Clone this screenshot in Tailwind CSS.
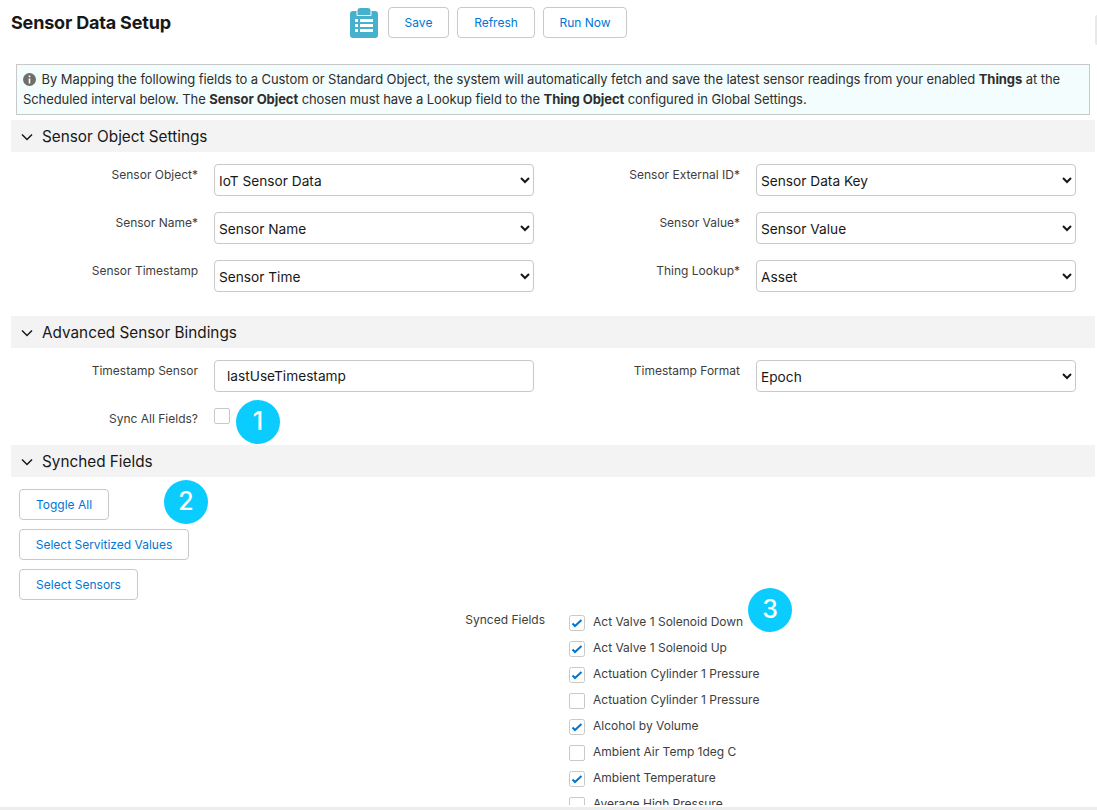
<!DOCTYPE html>
<html lang="en">
<head>
<meta charset="utf-8">
<title>Sensor Data Setup</title>
<script src="https://cdn.jsdelivr.net/npm/@tailwindcss/browser@4"></script>
</head>
<body class="bg-white font-['Inter',sans-serif] text-[#3e3e3c]">
<div class="relative h-[810px] w-[1097px] overflow-hidden">
 <div class="h-[805px] overflow-hidden">
  <header class="flex h-[64px] items-start pl-[11px] pt-[7px]">
    <h1 class="w-[339px] pt-[5px] text-[18px] leading-[22px] font-bold tracking-[-0.18px] text-[#181818]">Sensor Data Setup</h1>
    <svg class="h-[31px] w-[28px]" viewBox="0 0 28 31" aria-hidden="true">
      <path d="M3 4h22a3 3 0 0 1 3 3v21a3 3 0 0 1-3 3H3a3 3 0 0 1-3-3V7a3 3 0 0 1 3-3z" fill="#45b1cd"/>
      <path d="M7 8.500V3.500A3 3 0 0 1 10 .5h8a3 3 0 0 1 3 3v5z" fill="#45b1cd" stroke="#fff" stroke-width="1"/>
      <path d="M5 12h3v3H5zM10 12h13v3H10zM5 17h3v3H5zM10 17h13v3H10zM5 22h3v3H5zM10 22h13v3H10z" fill="#fff"/>
    </svg>
    <div class="ml-[10px] flex gap-2">
      <button class="h-[31px] w-[61px] rounded-[4px] border border-[#c9c9c9] bg-white text-[12px] text-[#0176d3]">Save</button>
      <button class="h-[31px] w-[78px] rounded-[4px] border border-[#c9c9c9] bg-white text-[12px] text-[#0176d3]">Refresh</button>
      <button class="h-[31px] w-[84px] rounded-[4px] border border-[#c9c9c9] bg-white text-[12px] text-[#0176d3]">Run Now</button>
    </div>
  </header>

  <div class="ml-[16px] h-[51px] w-[1074px] border border-[#c9c9c9] bg-[#f3fdfd] px-[6px] pt-[4px] text-[13px] leading-[20px] tracking-[-0.08px] text-[#2e2e2e]">
    <svg class="mr-[2px] inline-block h-[13px] w-[13px] align-[-2px]" viewBox="0 0 13 13" aria-hidden="true"><circle cx="6.500" cy="6.500" r="6.500" fill="#706e6b"/><path d="M5.700 2.600h1.600v1.600H5.700zM5.700 5.400h1.600v5H5.700z" fill="#fff"/></svg>
    By Mapping the following fields to a Custom or Standard Object, the system will automatically fetch and save the latest sensor readings from your enabled <b>Things</b> at the Scheduled interval below. The <b>Sensor Object</b> chosen must have a Lookup field to the <b>Thing Object</b> configured in Global Settings.
  </div>

  <section class="mt-[5px]">
    <h2 class="ml-[11px] flex h-[32px] w-[1084px] items-center gap-[9px] bg-[#f3f3f3] pl-[10px] pt-[2px] text-[15.3px] text-[#181818]">
      <svg class="h-[12px] w-[12px]" viewBox="0 0 12 12" fill="none" stroke="#181818" stroke-width="1.500" aria-hidden="true"><path d="M1 3.500l5 5 5-5"/></svg>Sensor Object Settings
    </h2>
    <div class="mt-[12px] ml-[11px] grid grid-cols-[187px_336px_206px_320px] gap-y-[16px] text-[12px]">
      <label class="pt-[3px] text-right leading-[15px]">Sensor Object*</label>
      <select class="ml-[16px] h-[32px] w-[320px] rounded-[4px] border border-[#c9c9c9] bg-white pt-[2px] text-[13.7px] text-[#181818]"><option>IoT Sensor Data</option></select>
      <label class="pt-[3px] text-right leading-[15px]">Sensor External ID*</label>
      <select class="ml-[16px] h-[32px] w-[320px] rounded-[4px] border border-[#c9c9c9] bg-white pt-[2px] text-[13.7px] text-[#181818]"><option>Sensor Data Key</option></select>

      <label class="pt-[3px] text-right leading-[15px]">Sensor Name*</label>
      <select class="ml-[16px] h-[32px] w-[320px] rounded-[4px] border border-[#c9c9c9] bg-white pt-[2px] text-[13.7px] text-[#181818]"><option>Sensor Name</option></select>
      <label class="pt-[3px] text-right leading-[15px]">Sensor Value*</label>
      <select class="ml-[16px] h-[32px] w-[320px] rounded-[4px] border border-[#c9c9c9] bg-white pt-[2px] text-[13.7px] text-[#181818]"><option>Sensor Value</option></select>

      <label class="pt-[3px] text-right leading-[15px]">Sensor Timestamp</label>
      <select class="ml-[16px] h-[32px] w-[320px] rounded-[4px] border border-[#c9c9c9] bg-white pt-[2px] text-[13.7px] text-[#181818]"><option>Sensor Time</option></select>
      <label class="pt-[3px] text-right leading-[15px]">Thing Lookup*</label>
      <select class="ml-[16px] h-[32px] w-[320px] rounded-[4px] border border-[#c9c9c9] bg-white pt-[2px] text-[13.7px] text-[#181818]"><option>Asset</option></select>
    </div>
  </section>

  <section class="mt-[24px]">
    <h2 class="ml-[11px] flex h-[32px] w-[1084px] items-center gap-[9px] bg-[#f3f3f3] pl-[10px] pt-[2px] text-[15.3px] text-[#181818]">
      <svg class="h-[12px] w-[12px]" viewBox="0 0 12 12" fill="none" stroke="#181818" stroke-width="1.500" aria-hidden="true"><path d="M1 3.500l5 5 5-5"/></svg>Advanced Sensor Bindings
    </h2>
    <div class="mt-[12px] ml-[11px] grid grid-cols-[187px_336px_206px_320px] gap-y-[16px] text-[12px]">
      <label class="pt-[3px] text-right leading-[15px]">Timestamp Sensor</label>
      <input class="ml-[16px] h-[32px] w-[320px] rounded-[4px] border border-[#c9c9c9] bg-white px-[12px] text-[13.7px] text-[#181818]" value="lastUseTimestamp">
      <label class="pt-[3px] text-right leading-[15px]">Timestamp Format</label>
      <select class="ml-[16px] h-[32px] w-[320px] rounded-[4px] border border-[#c9c9c9] bg-white pt-[2px] text-[13.7px] text-[#181818]"><option>Epoch</option></select>

      <label class="pt-[3px] text-right leading-[15px]">Sync All Fields?</label>
      <span class="ml-[16px] block h-[16px] w-[16px] rounded-[2px] border border-[#c9c9c9] bg-white"></span>
    </div>
  </section>

  <section class="mt-[19px]">
    <h2 class="ml-[11px] flex h-[32px] w-[1084px] items-center gap-[9px] bg-[#f3f3f3] pl-[10px] pt-[2px] text-[15.3px] text-[#181818]">
      <svg class="h-[12px] w-[12px]" viewBox="0 0 12 12" fill="none" stroke="#181818" stroke-width="1.500" aria-hidden="true"><path d="M1 3.500l5 5 5-5"/></svg>Synched Fields
    </h2>
    <div class="mt-[12px] ml-[19px] flex flex-col items-start gap-[9px]">
      <button class="h-[31px] w-[90px] rounded-[4px] border border-[#c9c9c9] bg-white text-[12px] text-[#0176d3]">Toggle All</button>
      <button class="h-[31px] w-[170px] rounded-[4px] border border-[#c9c9c9] bg-white text-[12px] text-[#0176d3]">Select Servitized Values</button>
      <button class="h-[31px] w-[119px] rounded-[4px] border border-[#c9c9c9] bg-white text-[12px] text-[#0176d3]">Select Sensors</button>
    </div>
    <div class="mt-[9px] flex text-[12px]">
      <div class="w-[545px] pt-[3px] text-right leading-[15px]">Synced Fields</div>
      <ul class="ml-[24px] flex flex-col gap-[10px] pt-[6px]">
        <li class="flex items-start gap-2"><svg class="h-[16px] w-[16px]" viewBox="0 0 16 16" aria-hidden="true"><rect x=".5" y=".5" width="15" height="15" rx="2" fill="#fff" stroke="#c9c9c9"/><path d="M3.500 8.500l2.500 2.500 6.500-6" fill="none" stroke="#0176d3" stroke-width="2"/></svg><span class="leading-[14px]">Act Valve 1 Solenoid Down</span></li>
        <li class="flex items-start gap-2"><svg class="h-[16px] w-[16px]" viewBox="0 0 16 16" aria-hidden="true"><rect x=".5" y=".5" width="15" height="15" rx="2" fill="#fff" stroke="#c9c9c9"/><path d="M3.500 8.500l2.500 2.500 6.500-6" fill="none" stroke="#0176d3" stroke-width="2"/></svg><span class="leading-[14px]">Act Valve 1 Solenoid Up</span></li>
        <li class="flex items-start gap-2"><svg class="h-[16px] w-[16px]" viewBox="0 0 16 16" aria-hidden="true"><rect x=".5" y=".5" width="15" height="15" rx="2" fill="#fff" stroke="#c9c9c9"/><path d="M3.500 8.500l2.500 2.500 6.500-6" fill="none" stroke="#0176d3" stroke-width="2"/></svg><span class="leading-[14px]">Actuation Cylinder 1 Pressure</span></li>
        <li class="flex items-start gap-2"><span class="h-[16px] w-[16px] rounded-[2px] border border-[#c9c9c9]"></span><span class="leading-[14px]">Actuation Cylinder 1 Pressure</span></li>
        <li class="flex items-start gap-2"><svg class="h-[16px] w-[16px]" viewBox="0 0 16 16" aria-hidden="true"><rect x=".5" y=".5" width="15" height="15" rx="2" fill="#fff" stroke="#c9c9c9"/><path d="M3.500 8.500l2.500 2.500 6.500-6" fill="none" stroke="#0176d3" stroke-width="2"/></svg><span class="leading-[14px]">Alcohol by Volume</span></li>
        <li class="flex items-start gap-2"><span class="h-[16px] w-[16px] rounded-[2px] border border-[#c9c9c9]"></span><span class="leading-[14px]">Ambient Air Temp 1deg C</span></li>
        <li class="flex items-start gap-2"><svg class="h-[16px] w-[16px]" viewBox="0 0 16 16" aria-hidden="true"><rect x=".5" y=".5" width="15" height="15" rx="2" fill="#fff" stroke="#c9c9c9"/><path d="M3.500 8.500l2.500 2.500 6.500-6" fill="none" stroke="#0176d3" stroke-width="2"/></svg><span class="leading-[14px]">Ambient Temperature</span></li>
        <li class="flex items-start gap-2"><span class="h-[16px] w-[16px] rounded-[2px] border border-[#c9c9c9]"></span><span class="leading-[14px]">Average High Pressure</span></li>
      </ul>
    </div>
  </section>
 </div>

  <div class="absolute top-[15px] right-0 h-[30px] w-[2px] rounded-l-[2px] bg-[#e8e8e8]"></div>
  <div class="absolute bottom-0 left-0 h-[3px] w-full bg-[#ededed]"></div>
  <div class="absolute top-[400px] left-[236px] flex h-[44px] w-[44px] items-center justify-center rounded-full bg-[#0accff] text-[25px] font-medium text-white">1</div>
  <div class="absolute top-[480px] left-[164px] flex h-[44px] w-[44px] items-center justify-center rounded-full bg-[#0accff] text-[25px] font-medium text-white">2</div>
  <div class="absolute top-[588px] left-[748px] flex h-[44px] w-[44px] items-center justify-center rounded-full bg-[#0accff] text-[25px] font-medium text-white">3</div>
</div>
</body>
</html>
